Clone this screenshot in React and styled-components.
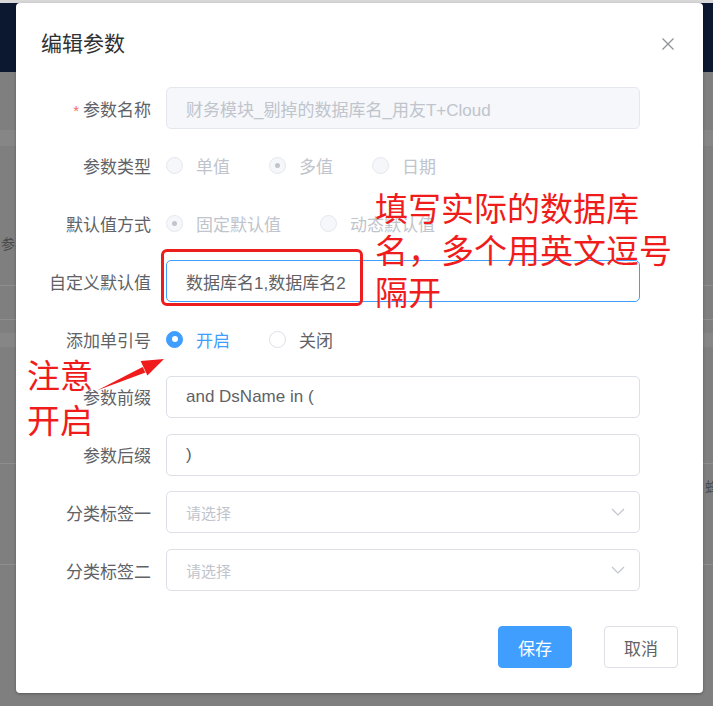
import React from 'react';
import styled, { createGlobalStyle } from 'styled-components';

const GlobalStyle = createGlobalStyle`
   html, body {
      margin: 0;
      padding: 0;
      background: #7f7f7f;
   }
   body {
      font-family: 'Liberation Sans', 'Noto Sans CJK SC', sans-serif;
   }
`;

const Page = styled.div`
   position: relative;
   width: 713px;
   height: 706px;
   overflow: hidden;
   background: #7f7f7f;
   display: flex;
   flex-direction: column;
`;

const TopLine = styled.div`
   height: 3px;
   background: #d8d8d8;
`;

const NavBar = styled.div`
   height: 69px;
   background: #0c1830;
`;

const BgRow = styled.div`
   height: ${p => p.h}px;
   background: ${p => (p.band ? '#868686' : 'transparent')};
   border-bottom: ${p => (p.line ? '1px solid #8e8e8e' : 'none')};
   box-sizing: border-box;
   display: flex;
   align-items: flex-end;
   justify-content: ${p => (p.right ? 'flex-end' : 'flex-start')};
   padding-bottom: ${p => p.pb || 0}px;
`;

const BgText = styled.span`
   font-size: 14px;
   color: #4a4a4a;
   margin-left: ${p => p.ml || 0}px;
   margin-right: ${p => p.mr || 0}px;
`;

const Dialog = styled.div`
   position: absolute;
   left: 16px;
   top: 3px;
   width: 687px;
   height: 690px;
   background: #fff;
   border-radius: 4px;
   box-shadow: 0 1px 3px rgba(0, 0, 0, 0.3);
   display: flex;
   flex-direction: column;
   box-sizing: border-box;
`;

const Header = styled.div`
   height: 84px;
   box-sizing: border-box;
   padding: 28px 29px 0 25px;
   display: flex;
   justify-content: space-between;
   align-items: flex-start;
`;

const Title = styled.span`
   font-size: 21px;
   line-height: 26px;
   color: #303133;
`;

const Close = styled.span`
   height: 26px;
   display: flex;
   align-items: center;
`;

const Form = styled.div`
   display: flex;
   flex-direction: column;
   gap: 15.75px;
`;

const Item = styled.div`
   display: flex;
   align-items: center;
   height: 42px;
`;

const Label = styled.div`
   width: 150px;
   padding-right: 15px;
   box-sizing: border-box;
   text-align: right;
   font-size: 17px;
   color: #606266;
   white-space: nowrap;
`;

const Star = styled.span`
   color: #f56c6c;
   margin-right: 4px;
   font-size: 15px;
`;

const Box = styled.div`
   width: 474px;
   height: 42px;
   box-sizing: border-box;
   border: 1px solid ${p => (p.disabled ? '#e4e7ed' : p.focus ? '#409eff' : '#dcdfe6')};
   background: ${p => (p.disabled ? '#f5f7fa' : '#fff')};
   border-radius: 5px;
   padding: 0 14px 0 19px;
   display: flex;
   align-items: center;
   justify-content: space-between;
   font-size: ${p => (p.placeholder ? 15 : 17)}px;
   color: ${p => (p.disabled || p.placeholder ? '#c0c4cc' : '#606266')};
   white-space: nowrap;
`;

const RadioGroup = styled.div`
   display: flex;
   align-items: center;
   gap: 39px;
`;

const Radio = styled.label`
   display: flex;
   align-items: center;
   gap: 13px;
   font-size: 17px;
   color: ${p => (p.disabled ? '#c0c4cc' : p.checked ? '#409eff' : '#606266')};
`;

const Circle = styled.span`
   width: 17px;
   height: 17px;
   box-sizing: border-box;
   border-radius: 50%;
   border: 1px solid ${p => (p.disabled ? '#e4e7ed' : p.checked ? '#409eff' : '#dcdfe6')};
   background: ${p => (p.disabled ? '#f5f7fa' : p.checked ? '#409eff' : '#fff')};
   display: flex;
   align-items: center;
   justify-content: center;

   &::after {
      content: '';
      display: ${p => (p.checked ? 'block' : 'none')};
      width: ${p => (p.disabled ? 5 : 6)}px;
      height: ${p => (p.disabled ? 5 : 6)}px;
      border-radius: 50%;
      background: ${p => (p.disabled ? '#c0c4cc' : '#fff')};
   }
`;

const Footer = styled.div`
   margin-top: auto;
   padding: 0 25px 25px 0;
   display: flex;
   justify-content: flex-end;
   gap: 32px;
`;

const Button = styled.button`
   width: 74px;
   height: 42px;
   border-radius: 4px;
   font-family: inherit;
   font-size: 17px;
   border: 1px solid ${p => (p.primary ? '#409eff' : '#dcdfe6')};
   background: ${p => (p.primary ? '#409eff' : '#fff')};
   color: ${p => (p.primary ? '#fff' : '#606266')};
   padding: 0;
`;

const Mark = styled.div`
   position: absolute;
   left: 161px;
   top: 249px;
   width: 202px;
   height: 57px;
   box-sizing: border-box;
   border: 3px solid #ee1d1d;
   border-radius: 6px;
`;

const Note = styled.div`
   position: absolute;
   left: ${p => p.x}px;
   top: ${p => p.y}px;
   font-family: 'Noto Sans CJK SC', sans-serif;
   font-size: 33px;
   line-height: ${p => p.lh}px;
   color: #f01c1c;
   white-space: nowrap;
`;

const Arrow = styled.svg`
   position: absolute;
   left: 0;
   top: 0;
`;

const Chevron = () => (
   <svg width="14" height="8" viewBox="0 0 14 8">
      <polyline points="1,1 7,7 13,1" fill="none" stroke="#c0c4cc" strokeWidth="1.2" />
   </svg>
);

const RadioOpt = ({ checked, disabled, children }) => (
   <Radio checked={checked} disabled={disabled}>
      <Circle checked={checked} disabled={disabled} />
      {children}
   </Radio>
);

export default function App() {
   return (
      <Page>
         <GlobalStyle />
         <TopLine />
         <NavBar />
         <BgRow h={58} />
         <BgRow h={16} band />
         <BgRow h={140} line pb={32}><BgText ml={1}>参</BgText></BgRow>
         <BgRow h={34} line />
         <BgRow h={13} />
         <BgRow h={14} band />
         <BgRow h={117} line />
         <BgRow h={101} line right pb={68}><BgText mr={-6}>蜂</BgText></BgRow>

         <Dialog>
            <Header>
               <Title>编辑参数</Title>
               <Close>
                  <svg width="12" height="12" viewBox="0 0 12 12">
                     <path d="M0.5 0.5 L11.5 11.5 M11.5 0.5 L0.5 11.5" stroke="#909399" strokeWidth="1.3" />
                  </svg>
               </Close>
            </Header>
            <Form>
               <Item>
                  <Label><Star>*</Star>参数名称</Label>
                  <Box disabled>财务模块_剔掉的数据库名_用友T+Cloud</Box>
               </Item>
               <Item>
                  <Label>参数类型</Label>
                  <RadioGroup>
                     <RadioOpt disabled>单值</RadioOpt>
                     <RadioOpt disabled checked>多值</RadioOpt>
                     <RadioOpt disabled>日期</RadioOpt>
                  </RadioGroup>
               </Item>
               <Item>
                  <Label>默认值方式</Label>
                  <RadioGroup>
                     <RadioOpt disabled checked>固定默认值</RadioOpt>
                     <RadioOpt disabled>动态默认值</RadioOpt>
                  </RadioGroup>
               </Item>
               <Item>
                  <Label>自定义默认值</Label>
                  <Box focus>数据库名1,数据库名2</Box>
               </Item>
               <Item>
                  <Label>添加单引号</Label>
                  <RadioGroup>
                     <RadioOpt checked>开启</RadioOpt>
                     <RadioOpt>关闭</RadioOpt>
                  </RadioGroup>
               </Item>
               <Item>
                  <Label>参数前缀</Label>
                  <Box>and DsName in (</Box>
               </Item>
               <Item>
                  <Label>参数后缀</Label>
                  <Box>)</Box>
               </Item>
               <Item>
                  <Label>分类标签一</Label>
                  <Box placeholder>请选择<Chevron /></Box>
               </Item>
               <Item>
                  <Label>分类标签二</Label>
                  <Box placeholder>请选择<Chevron /></Box>
               </Item>
            </Form>
            <Footer>
               <Button primary>保存</Button>
               <Button>取消</Button>
            </Footer>
         </Dialog>

         <Mark />
         <Note x={375} y={186} lh={42}>填写实际的数据库<br />名，多个用英文逗号<br />隔开</Note>
         <Note x={27} y={352} lh={45}>注意<br />开启</Note>
         <Arrow width="713" height="706">
            <polygon points="97,390.5 142.6,367 145.4,372.5" fill="#f01c1c" />
            <polygon points="164,359 140.6,360.9 147.4,375.5" fill="#f01c1c" />
         </Arrow>
      </Page>
   );
}
